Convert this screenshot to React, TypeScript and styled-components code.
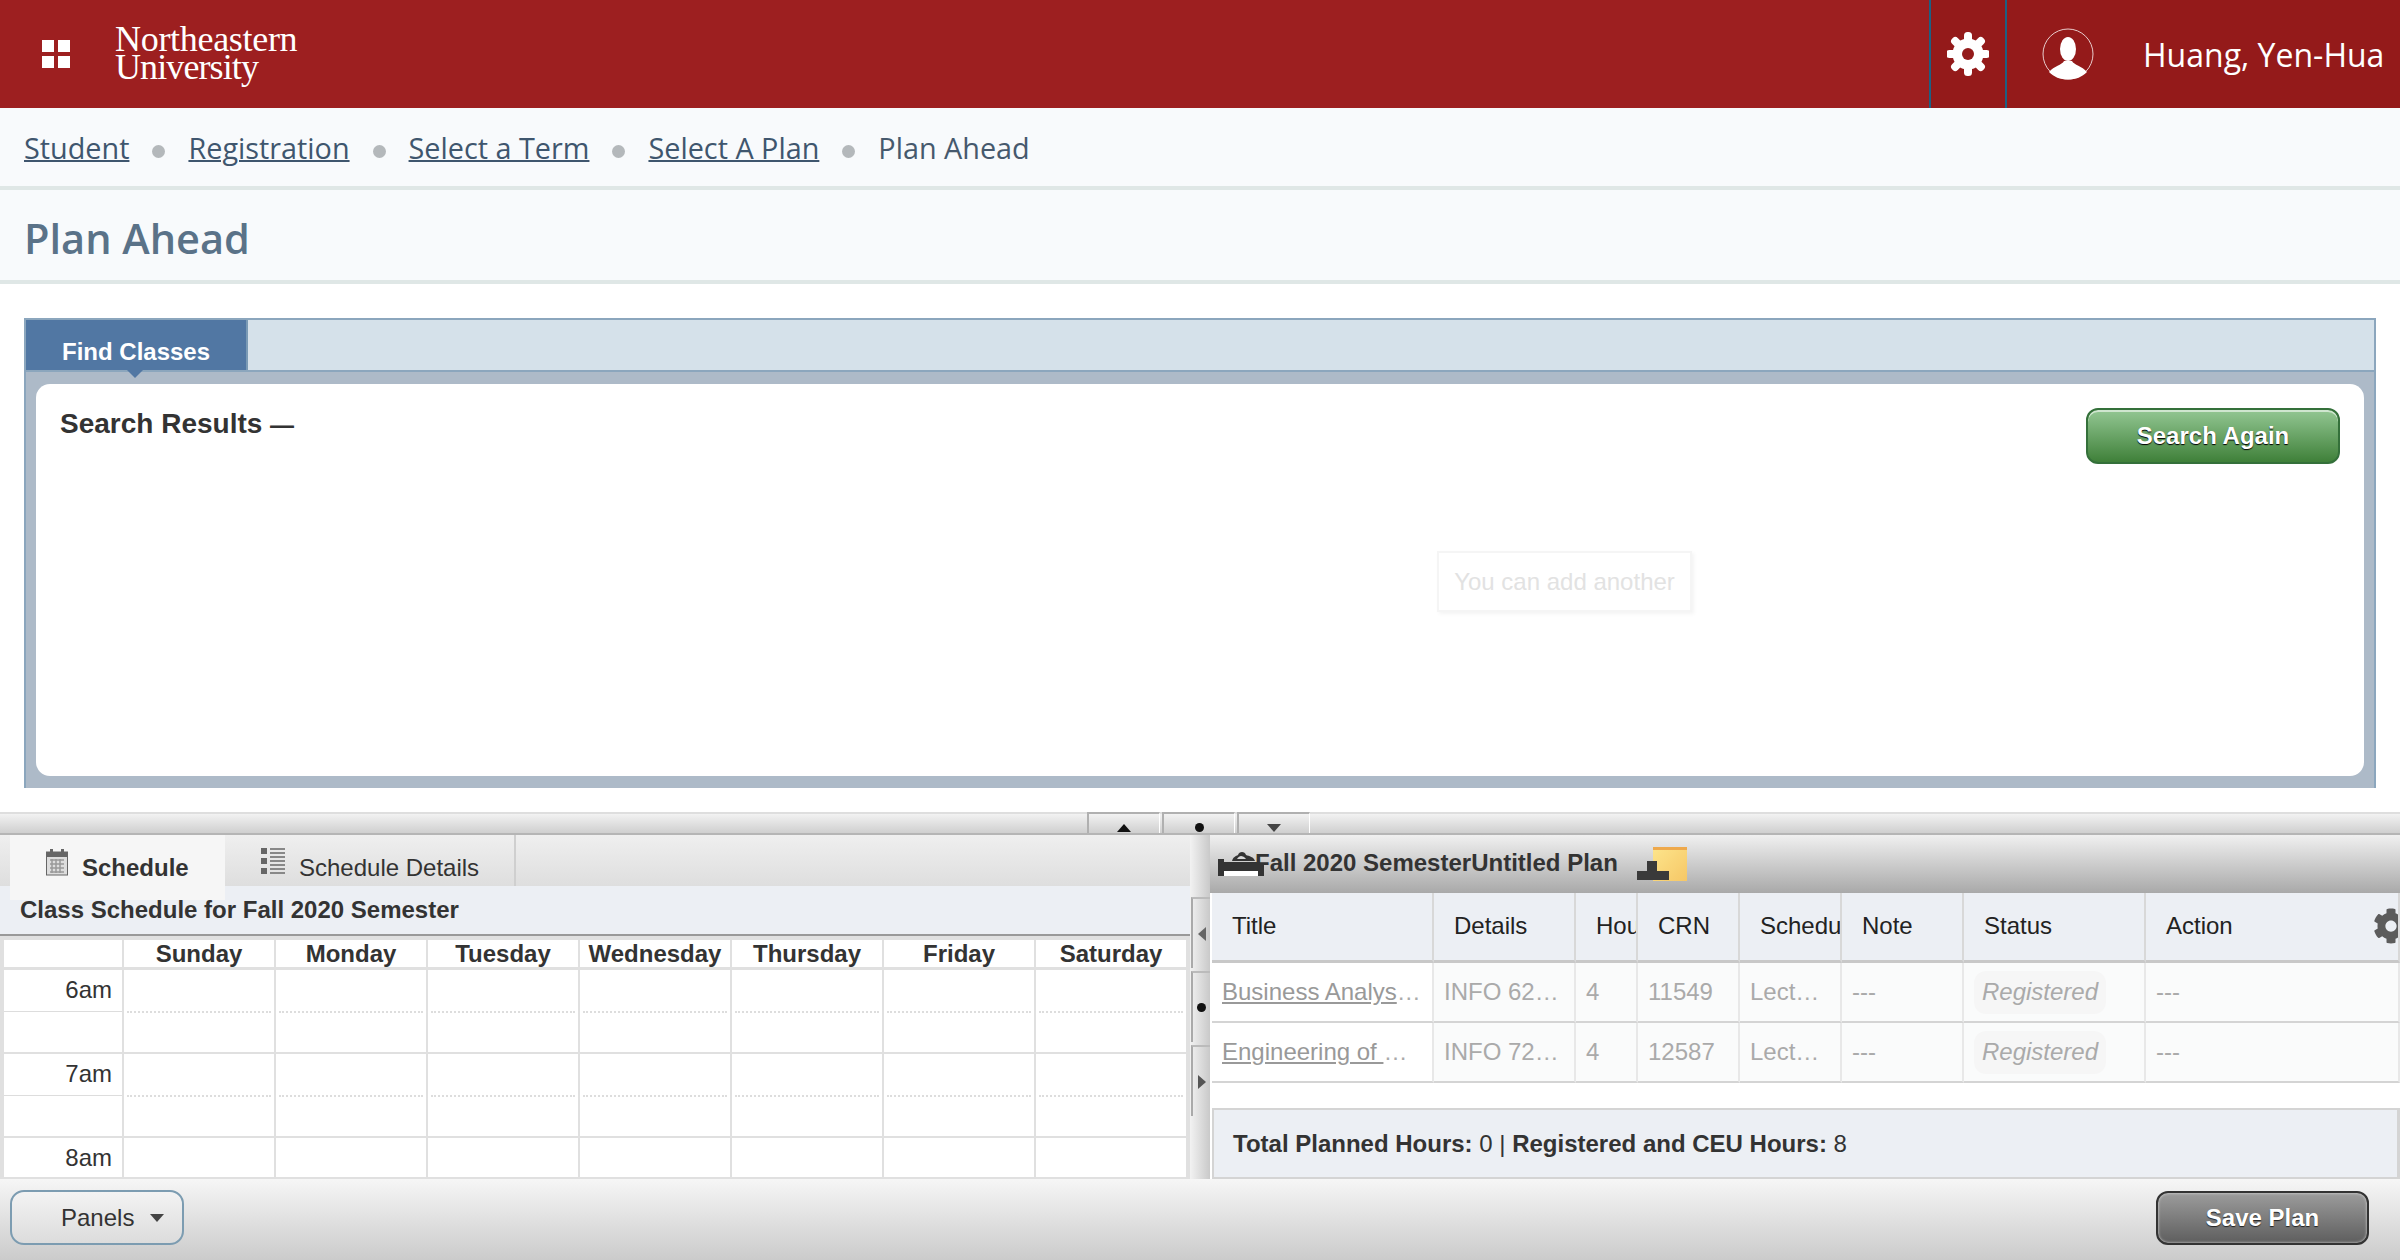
import { Fragment } from "react";
import { createGlobalStyle, styled } from "styled-components";
import { FaCog } from "react-icons/fa";

const GlobalStyle = createGlobalStyle`
    html, body {
        margin: 0;
        padding: 0;
        background: white;
    }
    body {
        font-family: "Liberation Sans", Arial, sans-serif;
        color: #333;
    }
    * {
        box-sizing: border-box;
    }
`;

const Page = styled.div`
    width: 2400px;
    height: 1260px;
    overflow: hidden;
    display: flex;
    flex-direction: column;
`;

const Header = styled.header`
    height: 108px;
    flex: none;
    display: flex;
    align-items: stretch;
    background: #9d1f20;
    color: white;
`;

const Brand = styled.div`
    flex: 1;
    display: flex;
    align-items: center;
    padding-left: 42px;
    gap: 45px;
`;

const GridIcon = styled.div`
    display: grid;
    grid-template-columns: 12px 12px;
    grid-template-rows: 12px 12px;
    gap: 4px;
    span {
        background: white;
    }
`;

const Logo = styled.div`
    font-family: "Liberation Serif", serif;
    font-size: 36px;
    line-height: 28px;
    letter-spacing: -0.3px;
    margin-top: -2px;
`;

const LogoLine = styled.div<{ $tight?: boolean }>`
    letter-spacing: ${(p) => (p.$tight ? "-0.9px" : "inherit")};
`;

const HeaderTools = styled.div`
    display: flex;
    align-items: center;
    background: #941a1a;
    width: 471px;
`;

const GearCell = styled.div`
    width: 78px;
    height: 100%;
    display: flex;
    align-items: center;
    justify-content: center;
    border-left: 2px solid #1d6083;
    border-right: 2px solid #1d6083;
`;

const Avatar = styled.svg`
    width: 52px;
    height: 52px;
    margin-left: 35px;
`;

const UserName = styled.div`
    font-family: "Open Sans", sans-serif;
    font-size: 32px;
    margin-left: 49px;
    white-space: nowrap;
`;

const Breadcrumbs = styled.nav`
    height: 82px;
    flex: none;
    display: flex;
    align-items: center;
    padding-left: 24px;
    background: #f8fafc;
    border-bottom: 4px solid #dfe7e6;
    font-family: "Open Sans", sans-serif;
    font-size: 28.8px;
    color: #46596d;
`;

const Crumb = styled.span<{ $link?: boolean }>`
    text-decoration: ${(p) => (p.$link ? "underline" : "none")};
    text-decoration-thickness: 2px;
    color: ${(p) => (p.$link ? "#3f566e" : "#46596d")};
`;

const CrumbDot = styled.span`
    width: 13px;
    height: 13px;
    margin: 8px 23px 0;
    border-radius: 50%;
    background: #b4b8bb;
`;

const TitleBar = styled.div`
    height: 94px;
    flex: none;
    display: flex;
    align-items: center;
    padding: 5px 0 0 24px;
    background: #f8fafc;
    border-bottom: 4px solid #dfe7e6;
`;

const PageTitle = styled.h1`
    margin: 0;
    font-family: "Open Sans", sans-serif;
    font-size: 41.500px;
    font-weight: 600;
    color: #5a7288;
`;

const FindPanel = styled.section`
    flex: none;
    height: 470px;
    margin: 34px 24px 24px;
    display: flex;
    flex-direction: column;
    border: 2px solid #8ba6bd;
    border-bottom: none;
    background: #adbac8;
`;

const TabBand = styled.div`
    height: 52px;
    flex: none;
    background: #d5e1ea;
    border-bottom: 2px solid #8ba6bd;
`;

const FindTab = styled.div`
    position: relative;
    width: 222px;
    height: 50px;
    display: flex;
    align-items: center;
    padding: 13px 0 0 36px;
    background: #5177a3;
    border-right: 2px solid #7a9ab5;
    color: white;
    font-size: 24px;
    font-weight: bold;

    &::after {
        content: "";
        position: absolute;
        left: 101px;
        top: 50px;
        border: 8px solid transparent;
        border-top-color: #5177a3;
        border-bottom: none;
    }
`;

const ResultsCard = styled.div`
    position: relative;
    flex: none;
    height: 392px;
    margin: 12px 10px 0;
    padding: 24px;
    display: flex;
    justify-content: space-between;
    align-items: flex-start;
    background: white;
    border-radius: 14px;
`;

const ResultsTitle = styled.h2`
    margin: 0;
    font-size: 28px;
    font-weight: bold;
    line-height: 32px;
`;

const TitleDash = styled.span`
    font-size: 24px;
`;

const GreenButton = styled.button`
    width: 254px;
    height: 56px;
    border: 2px solid #34703a;
    border-radius: 12px;
    background: linear-gradient(#93c793, #3f8039);
    box-shadow: inset 0 2px 0 #cfe6cf;
    color: white;
    font-family: inherit;
    font-size: 24px;
    font-weight: bold;
    text-shadow: 0 1px 1px #000;
`;

const FadedTip = styled.div`
    position: absolute;
    left: 1401px;
    top: 167px;
    width: 255px;
    height: 61px;
    display: flex;
    align-items: center;
    justify-content: center;
    border: 2px solid #f5f5f5;
    box-shadow: 2px 2px 4px #f4f4f4;
    color: #e2e2e2;
    font-size: 24px;
    white-space: nowrap;
`;

const SplitBar = styled.div`
    height: 23px;
    flex: none;
    display: flex;
    justify-content: center;
    align-items: flex-end;
    gap: 2px;
    padding-right: 3px;
    background: linear-gradient(#f2f2f2, #cfcfcf);
    border-top: 2px solid #dedede;
    border-bottom: 2px solid #b5b5b5;
`;

const SplitHandle = styled.div`
    width: 73px;
    height: 21px;
    display: flex;
    justify-content: center;
    align-items: flex-end;
    padding-bottom: 1px;
    border-left: 2px solid #b0b0b0;
    border-top: 2px solid #b0b0b0;
    border-right: 1px solid white;
`;

const Workspace = styled.div`
    height: 344px;
    flex: none;
    display: flex;
`;

const LeftPane = styled.div`
    width: 1190px;
    flex: none;
    display: flex;
    flex-direction: column;
    background: #e0e0e0;
`;

const TabRow = styled.div`
    height: 51px;
    flex: none;
    display: flex;
    padding-left: 10px;
    background: linear-gradient(#efefef, #dedede);
`;

const ScheduleTab = styled.div<{ $active?: boolean }>`
    position: relative;
    z-index: 1;
    width: ${(p) => (p.$active ? "215px" : "291px")};
    height: ${(p) => (p.$active ? "65px" : "51px")};
    display: flex;
    align-items: flex-start;
    gap: 14px;
    padding: 13px 0 0 36px;
    background: ${(p) => (p.$active ? "#f6f6f6" : "transparent")};
    border-right: 2px solid ${(p) => (p.$active ? "transparent" : "#cfcfcf")};
    font-size: 24px;
    font-weight: ${(p) => (p.$active ? "bold" : "normal")};
    span {
        margin-top: 6px;
    }
`;

const ScheduleCaption = styled.div`
    height: 50px;
    flex: none;
    display: flex;
    align-items: center;
    padding-left: 20px;
    background: #eceff4;
    border-bottom: 2px solid #999;
    font-size: 24px;
    font-weight: bold;
`;

const Calendar = styled.div`
    flex: 1;
    margin: 4px 2px 0 4px;
    display: grid;
    grid-template-columns: 120px repeat(7, 152px);
    grid-template-rows: 30px 84px 84px 41px;
    overflow: hidden;
    background: white;
`;

const DayHead = styled.div`
    display: flex;
    align-items: center;
    justify-content: center;
    border-right: 2px solid #e0e0e0;
    border-bottom: 3px solid #e0e0e0;
    font-size: 24px;
    font-weight: bold;
`;

const TimeCell = styled.div`
    padding: 6px 10px 0 0;
    text-align: right;
    font-size: 24px;
    line-height: 28px;
    border-right: 2px solid #e0e0e0;
    border-bottom: 2px solid #e0e0e0;
    background-image: linear-gradient(#ddd 50%, transparent 50%);
    background-size: 100% 2px;
    background-repeat: no-repeat;
    background-position: 0 41px;
`;

const SlotCell = styled.div<{ $half?: boolean }>`
    border-right: 2px solid #e0e0e0;
    border-bottom: 2px solid #e0e0e0;

    &::after {
        content: "";
        display: ${(p) => (p.$half ? "block" : "none")};
        margin: 41px 3px 0;
        border-top: 2px dotted #ddd;
    }
`;

const VerticalSplit = styled.div`
    width: 20px;
    flex: none;
    display: flex;
    flex-direction: column;
    gap: 3px;
    padding: 62px 0 0 1px;
    background: linear-gradient(to right, #f2f2f2, #c9c9c9);
`;

const VerticalHandle = styled.div`
    height: 71px;
    display: flex;
    align-items: center;
    justify-content: center;
    border-left: 2px solid #aaa;
    border-top: 2px solid #bbb;
`;

const RightPane = styled.div`
    flex: 1;
    display: flex;
    flex-direction: column;
    background: white;
    overflow: hidden;
    min-width: 0;
`;

const PlanHeader = styled.div`
    height: 58px;
    flex: none;
    display: flex;
    align-items: center;
    padding: 0 0 2px 8px;
    background: linear-gradient(#f0f0f0, #a9a9a9);
    font-size: 24px;
    font-weight: bold;
`;

const PlanName = styled.span`
    margin-left: -9px;
`;

const PlanGrid = styled.div`
    flex: none;
    display: grid;
    margin-left: 2px;
    grid-template-columns: 222px 142px 62px 102px 102px 122px 182px 254px;
    font-size: 24px;
`;

const HeadCell = styled.div`
    position: relative;
    height: 70px;
    display: flex;
    align-items: center;
    padding: 0 0 2px 20px;
    overflow: hidden;
    white-space: nowrap;
    background: #eceff4;
    border-right: 2px solid #d8d8d8;
    border-bottom: 3px solid #c8c8c8;
    color: #222;
`;

const GearSpot = styled.div`
    position: absolute;
    left: 227px;
    top: 15px;
    color: #5c5c5c;
    font-size: 36px;
    line-height: 36px;
`;

const BodyCell = styled.div<{ $title?: boolean }>`
    height: 60px;
    display: flex;
    align-items: center;
    padding-left: 10px;
    overflow: hidden;
    white-space: nowrap;
    background: ${(p) => (p.$title ? "white" : "#fafbfb")};
    border-right: 2px solid #e8e8e8;
    border-bottom: 2px solid #d4d4d4;
    color: #aaa;
`;

const TitleLink = styled.span`
    color: #999;
    text-decoration: underline;
    white-space: pre;
`;

const StatusPill = styled.span`
    width: 132px;
    height: 43px;
    display: flex;
    align-items: center;
    justify-content: center;
    border-radius: 12px;
    background: #f6f6f6;
    font-style: italic;
`;

const Totals = styled.div`
    height: 71px;
    flex: none;
    margin: 25px 0 0 2px;
    display: flex;
    align-items: center;
    padding-left: 19px;
    background: #eceff4;
    border: 2px solid #d4d4d4;
    border-right-width: 3px;
    font-size: 24px;
    white-space: pre;
`;

const BottomBar = styled.footer`
    height: 81px;
    flex: none;
    display: flex;
    justify-content: space-between;
    align-items: center;
    padding: 0 31px 4px 10px;
    background: linear-gradient(#f6f6f6, #cbcbcb);
`;

const PanelsButton = styled.button`
    width: 174px;
    height: 55px;
    display: flex;
    align-items: center;
    gap: 16px;
    padding: 0 0 0 49px;
    border: 2px solid #7c9cb1;
    border-radius: 14px;
    background: linear-gradient(#f3f3f3, #dcdcdc);
    color: #333;
    font-family: inherit;
    font-size: 24px;
`;

const Caret = styled.span`
    border: 7px solid transparent;
    border-top: 8px solid #444;
    border-bottom: none;
`;

const SaveButton = styled.button`
    width: 213px;
    height: 54px;
    border: 2px solid #333;
    border-radius: 12px;
    background: linear-gradient(#9c9c9c, #5e5e5e);
    box-shadow: inset 0 0 3px #ddd;
    color: white;
    font-family: inherit;
    font-size: 24px;
    font-weight: bold;
    text-shadow: 0 1px 1px #222;
`;

const Arrow = styled.span<{ $dir: "up" | "down" | "left" | "right" | "dot" }>`
    display: block;
    ${(p) => p.$dir === "dot" && "width: 9px; height: 9px; border-radius: 50%; background: #111;"}
    ${(p) => p.$dir === "up" && "border: 7px solid transparent; border-bottom: 8px solid #111; border-top: none;"}
    ${(p) => p.$dir === "down" && "border: 7px solid transparent; border-top: 8px solid #444; border-bottom: none;"}
    ${(p) => p.$dir === "left" && "border: 7px solid transparent; border-right: 8px solid #666; border-left: none;"}
    ${(p) => p.$dir === "right" && "border: 7px solid transparent; border-left: 8px solid #555; border-right: none;"}
`;

// eight stubby rounded teeth round a ring, as the reference's header gear
const HeaderGear = () => (
    <svg width="42" height="44" viewBox="0 0 42 44">
        {[0, 45, 90, 135].map((a) => (
            <rect key={a} x="17" y="0" width="8" height="44" rx="3.500" fill="white" transform={`rotate(${a} 21 22)`} />
        ))}
        <circle cx="21" cy="22" r="12" fill="none" stroke="white" strokeWidth="7" />
        <circle cx="21" cy="22" r="6" fill="#941a1a" />
    </svg>
);

const CalendarIcon = () => (
    <svg width="22" height="28" viewBox="0 0 22 28">
        <rect x="0.5" y="4" width="21" height="23" fill="#ddd" stroke="#666" />
        <rect x="0.5" y="4" width="21" height="5" fill="#666" />
        <rect x="4" y="1" width="3" height="5" fill="#666" />
        <rect x="15" y="1" width="3" height="5" fill="#666" />
        <path d="M4 12h14M4 16h14M4 20h14M4 24h14M6 11v14M10 11v14M14 11v14" stroke="#999" strokeWidth="1.5" />
    </svg>
);

const ListIcon = () => (
    <svg width="24" height="26" viewBox="0 0 24 26">
        <rect x="0" y="0" width="6" height="6" fill="#666" />
        <rect x="0" y="10" width="6" height="6" fill="#666" />
        <rect x="0" y="20" width="6" height="6" fill="#666" />
        <path d="M9 1h15M9 5h15M9 9h15M9 13h15M9 17h15M9 21h15M9 25h15" stroke="#888" strokeWidth="2" />
    </svg>
);

const BedIcon = () => (
    <svg width="46" height="26" viewBox="0 0 46 26" style={{ flex: "none" }}>
        <path d="M14 11c1-4 4-5 6-6 1-4 7-4 8 0 3 1 8 2 9 6z" fill="#333" />
        <path d="M19 9c1-2 3-3 4-3s4 1 5 3z" fill="#d8d8d8" />
        <path d="M0 9h6v3h34v3h6v11h-6v-5H6v5H0z" fill="#333" />
        <rect x="6" y="21" width="34" height="5" fill="#fff" />
    </svg>
);

const AddNoteIcon = () => (
    <svg width="50" height="34" viewBox="0 0 50 34" style={{ marginLeft: 19, marginTop: 2, flex: "none" }}>
        <defs>
            <linearGradient id="note" x1="0" y1="0" x2="1" y2="1">
                <stop offset="0" stopColor="#fde58c" />
                <stop offset="1" stopColor="#f6c766" />
            </linearGradient>
        </defs>
        <rect x="16" y="0" width="34" height="34" fill="url(#note)" />
        <rect x="16" y="0" width="34" height="3" fill="#eea94c" />
        <path d="M10 14h10v10h12v9H0v-9h10z" fill="#3a3a3a" />
    </svg>
);

const days = ["Sunday", "Monday", "Tuesday", "Wednesday", "Thursday", "Friday", "Saturday"];
const hours = ["6am", "7am", "8am"];
const planColumns = ["Title", "Details", "Hours", "CRN", "Schedule", "Note", "Status", "Action"];
const planRows = [
    { title: "Business Analys", details: "INFO 62", crn: "11549" },
    { title: "Engineering of ", details: "INFO 72", crn: "12587" },
];

export default function App() {
    return (
        <Page>
            <GlobalStyle />
            <Header>
                <Brand>
                    <GridIcon>
                        <span />
                        <span />
                        <span />
                        <span />
                    </GridIcon>
                    <Logo>
                        <LogoLine>Northeastern</LogoLine>
                        <LogoLine $tight>University</LogoLine>
                    </Logo>
                </Brand>
                <HeaderTools>
                    <GearCell>
                        <HeaderGear />
                    </GearCell>
                    <Avatar viewBox="0 0 52 52">
                        <circle cx="26" cy="26" r="25" fill="none" stroke="#e8cccc" strokeWidth="1" />
                        <ellipse cx="26" cy="21" rx="8" ry="12" fill="white" />
                        <path d="M7 44c5-6 13-7 15-11h8c2 4 10 5 15 11-5 5-11 7.500-19 7.500S12 49 7 44z" fill="white" />
                    </Avatar>
                    <UserName>Huang, Yen-Hua</UserName>
                </HeaderTools>
            </Header>
            <Breadcrumbs>
                <Crumb $link>Student</Crumb>
                <CrumbDot />
                <Crumb $link>Registration</Crumb>
                <CrumbDot />
                <Crumb $link>Select a Term</Crumb>
                <CrumbDot />
                <Crumb $link>Select A Plan</Crumb>
                <CrumbDot />
                <Crumb>Plan Ahead</Crumb>
            </Breadcrumbs>
            <TitleBar>
                <PageTitle>Plan Ahead</PageTitle>
            </TitleBar>
            <FindPanel>
                <TabBand>
                    <FindTab>Find Classes</FindTab>
                </TabBand>
                <ResultsCard>
                    <ResultsTitle>
                        Search Results <TitleDash>—</TitleDash>
                    </ResultsTitle>
                    <GreenButton>Search Again</GreenButton>
                    <FadedTip>You can add another</FadedTip>
                </ResultsCard>
            </FindPanel>
            <SplitBar>
                <SplitHandle>
                    <Arrow $dir="up" />
                </SplitHandle>
                <SplitHandle>
                    <Arrow $dir="dot" />
                </SplitHandle>
                <SplitHandle>
                    <Arrow $dir="down" />
                </SplitHandle>
            </SplitBar>
            <Workspace>
                <LeftPane>
                    <TabRow>
                        <ScheduleTab $active>
                            <CalendarIcon />
                            <span>Schedule</span>
                        </ScheduleTab>
                        <ScheduleTab>
                            <ListIcon />
                            <span>Schedule Details</span>
                        </ScheduleTab>
                    </TabRow>
                    <ScheduleCaption>Class Schedule for Fall 2020 Semester</ScheduleCaption>
                    <Calendar>
                        <DayHead />
                        {days.map((d) => (
                            <DayHead key={d}>{d}</DayHead>
                        ))}
                        {hours.map((h, i) => (
                            <Fragment key={h}>
                                <TimeCell>{h}</TimeCell>
                                {days.map((d) => (
                                    <SlotCell key={d} $half={i < 2} />
                                ))}
                            </Fragment>
                        ))}
                    </Calendar>
                </LeftPane>
                <VerticalSplit>
                    <VerticalHandle>
                        <Arrow $dir="left" />
                    </VerticalHandle>
                    <VerticalHandle>
                        <Arrow $dir="dot" />
                    </VerticalHandle>
                    <VerticalHandle>
                        <Arrow $dir="right" />
                    </VerticalHandle>
                </VerticalSplit>
                <RightPane>
                    <PlanHeader>
                        <BedIcon />
                        <PlanName>Fall 2020 SemesterUntitled Plan</PlanName>
                        <AddNoteIcon />
                    </PlanHeader>
                    <PlanGrid>
                        {planColumns.map((c) => (
                            <HeadCell key={c}>
                                {c}
                                {c === "Action" && (
                                    <GearSpot>
                                        <FaCog />
                                    </GearSpot>
                                )}
                            </HeadCell>
                        ))}
                        {planRows.map((r) => (
                            <Fragment key={r.crn}>
                                <BodyCell $title>
                                    <TitleLink>{r.title}</TitleLink>…
                                </BodyCell>
                                <BodyCell>{r.details}…</BodyCell>
                                <BodyCell>4</BodyCell>
                                <BodyCell>{r.crn}</BodyCell>
                                <BodyCell>Lect…</BodyCell>
                                <BodyCell>---</BodyCell>
                                <BodyCell>
                                    <StatusPill>Registered</StatusPill>
                                </BodyCell>
                                <BodyCell>---</BodyCell>
                            </Fragment>
                        ))}
                    </PlanGrid>
                    <Totals>
                        <span>
                            <b>Total Planned Hours:</b> 0 | <b>Registered and CEU Hours:</b> 8
                        </span>
                    </Totals>
                </RightPane>
            </Workspace>
            <BottomBar>
                <PanelsButton>
                    Panels
                    <Caret />
                </PanelsButton>
                <SaveButton>Save Plan</SaveButton>
            </BottomBar>
        </Page>
    );
}
